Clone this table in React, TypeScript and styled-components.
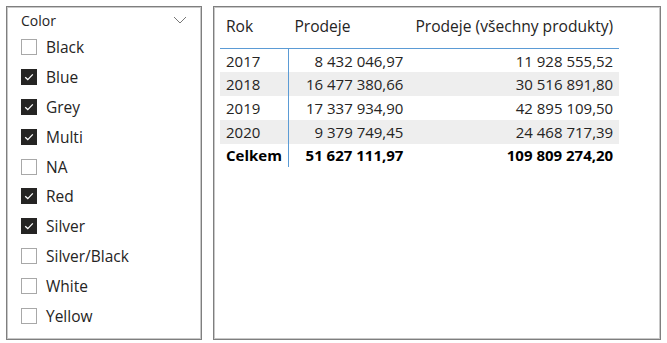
import React from "react";
import styled, { createGlobalStyle } from "styled-components";

const GlobalStyle = createGlobalStyle`
  body {
    margin: 0;
    background: #fff;
    font-family: "Segoe UI", "Open Sans", "Noto Sans", sans-serif;
    color: #252423;
  }
`;

const Page = styled.div`
  display: flex;
  gap: 11px;
  padding: 6px 0 0 6px;
  width: 667px;
  height: 343px;
  box-sizing: border-box;
`;

const Panel = styled.div<{ $width: number }>`
  width: ${({ $width }) => $width}px;
  height: 334px;
  box-sizing: border-box;
  border: 1px solid #7f7f7f;
  box-shadow: inset 0 0 0 1px #c8c8c8;
  background: #fff;
`;

const SlicerPanel = styled(Panel)`
  padding: 1px 14px 0 14px;
`;

const SlicerHeader = styled.div`
  display: flex;
  align-items: center;
  justify-content: space-between;
  height: 24px;
  font-size: 14px;
  color: #252423;
`;

const ItemList = styled.div`
  display: flex;
  flex-direction: column;
`;

const Item = styled.div`
  display: flex;
  align-items: center;
  gap: 9px;
  height: 29.9px;
  font-size: 15.5px;
  color: #252423;
`;

const Box = styled.span<{ $checked: boolean }>`
  display: flex;
  align-items: center;
  justify-content: center;
  width: 16px;
  height: 16px;
  box-sizing: border-box;
  border: 1px solid ${({ $checked }) => ($checked ? "#252423" : "#a8a8a8")};
  background: ${({ $checked }) => ($checked ? "#252423" : "#fff")};
`;

const TablePanel = styled(Panel)`
  padding: 2px 6px 0 6px;
`;

const Table = styled.table`
  border-collapse: collapse;
  font-size: 15px;
  color: #252423;
`;

const HeadCell = styled.th<{ $width: number; $align?: string }>`
  width: ${({ $width }) => $width}px;
  box-sizing: border-box;
  font-weight: 400;
  font-size: 15.6px;
  text-align: ${({ $align }) => $align || "left"};
  padding: 6px 6px 11px 6px;
  border-bottom: 1px solid #5b9bd5;
  white-space: nowrap;
`;

const Row = styled.tr<{ $shaded?: boolean; $total?: boolean }>`
  height: 23.75px;
  background: ${({ $shaded }) => ($shaded ? "#eeeeee" : "#fff")};
  font-weight: ${({ $total }) => ($total ? 700 : 400)};
  color: ${({ $total }) => ($total ? "#000" : "#252423")};
`;

const FirstRow = styled(Row)`
  td {
    padding-top: 1px;
  }
`;

const Cell = styled.td<{ $num?: boolean; $divider?: boolean }>`
  padding: 0 6px;
  text-align: ${({ $num }) => ($num ? "right" : "left")};
  white-space: nowrap;
  border-right: ${({ $divider }) => ($divider ? "1px solid #5b9bd5" : "none")};
`;

const Check = () => (
  <svg width="12" height="12" viewBox="0 0 12 12">
    <path d="M2.2 6.2 L4.8 8.6 L9.8 3.4" fill="none" stroke="#fff" strokeWidth="1.3" />
  </svg>
);

const Chevron = () => (
  <svg width="14" height="8" viewBox="0 0 14 8">
    <path d="M1 1 L7 7 L13 1" fill="none" stroke="#777" strokeWidth="1" />
  </svg>
);

const colors: [string, boolean][] = [
  ["Black", false],
  ["Blue", true],
  ["Grey", true],
  ["Multi", true],
  ["NA", false],
  ["Red", true],
  ["Silver", true],
  ["Silver/Black", false],
  ["White", false],
  ["Yellow", false],
];

const rows = [
  ["2017", "8 432 046,97", "11 928 555,52"],
  ["2018", "16 477 380,66", "30 516 891,80"],
  ["2019", "17 337 934,90", "42 895 109,50"],
  ["2020", "9 379 749,45", "24 468 717,39"],
];

export default function App() {
  return (
    <>
      <GlobalStyle />
      <Page>
        <SlicerPanel $width={196}>
          <SlicerHeader>
            <span>Color</span>
            <Chevron />
          </SlicerHeader>
          <ItemList>
            {colors.map(([name, checked]) => (
              <Item key={name}>
                <Box $checked={checked}>{checked && <Check />}</Box>
                {name}
              </Item>
            ))}
          </ItemList>
        </SlicerPanel>
        <TablePanel $width={448}>
          <Table>
            <thead>
              <tr>
                <HeadCell $width={68}>Rok</HeadCell>
                <HeadCell $width={121}>Prodeje</HeadCell>
                <HeadCell $width={209} $align="right">
                  Prodeje (všechny produkty)
                </HeadCell>
              </tr>
            </thead>
            <tbody>
              {rows.map((r, i) => {
                const R = i === 0 ? FirstRow : Row;
                return (
                  <R key={r[0]} $shaded={i % 2 === 1}>
                    <Cell $divider>{r[0]}</Cell>
                    <Cell $num>{r[1]}</Cell>
                    <Cell $num>{r[2]}</Cell>
                  </R>
                );
              })}
              <Row $total>
                <Cell $divider>Celkem</Cell>
                <Cell $num>51 627 111,97</Cell>
                <Cell $num>109 809 274,20</Cell>
              </Row>
            </tbody>
          </Table>
        </TablePanel>
      </Page>
    </>
  );
}
